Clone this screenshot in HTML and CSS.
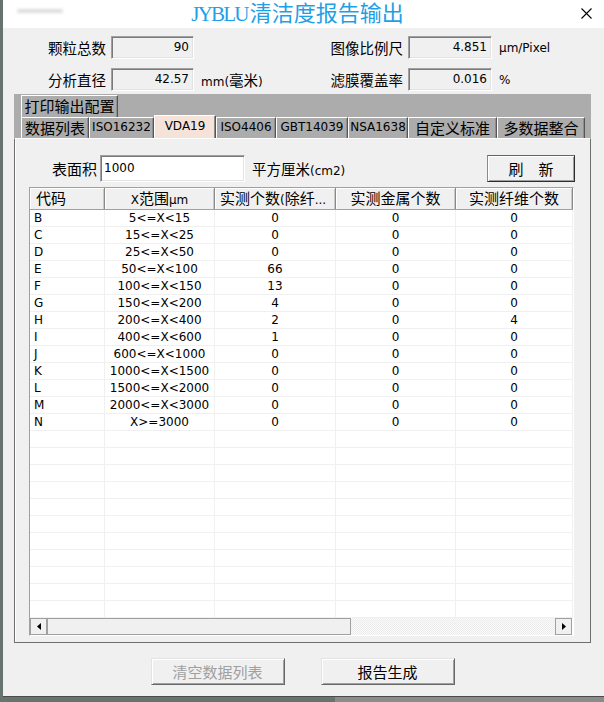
FILE: index.html
```html
<!DOCTYPE html>
<html lang="zh-CN">
<head>
    <meta charset="UTF-8">
    <title>JYBLU清洁度报告输出</title>
    <link rel="stylesheet" href="styles.css">
</head>
<body>
    <div class="window">
        <div class="titlebar">
            <div class="caption-blur"></div>
            <div class="title"><span class="brand">JYBLU</span>清洁度报告输出</div>
            <svg class="close" width="11" height="11" viewBox="0 0 11 11">
                <path d="M0.5 0.5L10.5 10.5M10.5 0.5L0.5 10.5" stroke="#000" stroke-width="1.1" fill="none"/>
            </svg>
        </div>

        <div class="info">
            <div class="lbl">颗粒总数</div>
            <div class="field">90</div>
            <div class="unit"></div>
            <div class="lbl">图像比例尺</div>
            <div class="field">4.851</div>
            <div class="unit">μm/Pixel</div>

            <div class="lbl">分析直径</div>
            <div class="field">42.57</div>
            <div class="unit">mm(<span class="cn">毫米</span>)</div>
            <div class="lbl">滤膜覆盖率</div>
            <div class="field">0.016</div>
            <div class="unit">%</div>
        </div>

        <div class="tabbox">
            <div class="tabstrip">
                <div class="tabrow">
                    <div class="tab cn t-print">打印输出配置</div>
                </div>
                <div class="tabrow">
                    <div class="tab cn t-list">数据列表</div>
                    <div class="tab t-iso16">ISO16232</div>
                    <div class="tab t-vda selected">VDA19</div>
                    <div class="tab t-iso44">ISO4406</div>
                    <div class="tab t-gbt">GBT14039</div>
                    <div class="tab t-nsa">NSA1638</div>
                    <div class="tab cn t-custom">自定义标准</div>
                    <div class="tab cn t-multi">多数据整合</div>
                </div>
            </div>

            <div class="panel">
                <div class="surface">
                    <div class="surface-lbl">表面积</div>
                    <div class="input">1000</div>
                    <div class="surface-unit"><span class="cn">平方厘米</span>(cm2)</div>
                    <button class="btn refresh">刷　新</button>
                </div>

                <div class="list">
                    <div class="list-head">
                        <div class="hcell left">代码</div>
                        <div class="hcell"><span class="lat">X</span>范围<span class="lat">μm</span></div>
                        <div class="hcell cut">实测个数<span class="lat">(</span>除纤<span class="lat">...</span></div>
                        <div class="hcell">实测金属个数</div>
                        <div class="hcell">实测纤维个数</div>
                    </div>
                    <div class="list-body">
                        <div class="row"><div class="code">B</div><div>5&lt;=X&lt;15</div><div>0</div><div>0</div><div>0</div></div>
                        <div class="row"><div class="code">C</div><div>15&lt;=X&lt;25</div><div>0</div><div>0</div><div>0</div></div>
                        <div class="row"><div class="code">D</div><div>25&lt;=X&lt;50</div><div>0</div><div>0</div><div>0</div></div>
                        <div class="row"><div class="code">E</div><div>50&lt;=X&lt;100</div><div>66</div><div>0</div><div>0</div></div>
                        <div class="row"><div class="code">F</div><div>100&lt;=X&lt;150</div><div>13</div><div>0</div><div>0</div></div>
                        <div class="row"><div class="code">G</div><div>150&lt;=X&lt;200</div><div>4</div><div>0</div><div>0</div></div>
                        <div class="row"><div class="code">H</div><div>200&lt;=X&lt;400</div><div>2</div><div>0</div><div>4</div></div>
                        <div class="row"><div class="code">I</div><div>400&lt;=X&lt;600</div><div>1</div><div>0</div><div>0</div></div>
                        <div class="row"><div class="code">J</div><div>600&lt;=X&lt;1000</div><div>0</div><div>0</div><div>0</div></div>
                        <div class="row"><div class="code">K</div><div>1000&lt;=X&lt;1500</div><div>0</div><div>0</div><div>0</div></div>
                        <div class="row"><div class="code">L</div><div>1500&lt;=X&lt;2000</div><div>0</div><div>0</div><div>0</div></div>
                        <div class="row"><div class="code">M</div><div>2000&lt;=X&lt;3000</div><div>0</div><div>0</div><div>0</div></div>
                        <div class="row"><div class="code">N</div><div>X&gt;=3000</div><div>0</div><div>0</div><div>0</div></div>
                        <div class="row"><div></div><div></div><div></div><div></div><div></div></div>
                        <div class="row"><div></div><div></div><div></div><div></div><div></div></div>
                        <div class="row"><div></div><div></div><div></div><div></div><div></div></div>
                        <div class="row"><div></div><div></div><div></div><div></div><div></div></div>
                        <div class="row"><div></div><div></div><div></div><div></div><div></div></div>
                        <div class="row"><div></div><div></div><div></div><div></div><div></div></div>
                        <div class="row"><div></div><div></div><div></div><div></div><div></div></div>
                        <div class="row"><div></div><div></div><div></div><div></div><div></div></div>
                        <div class="row"><div></div><div></div><div></div><div></div><div></div></div>
                        <div class="row"><div></div><div></div><div></div><div></div><div></div></div>
                        <div class="row"><div></div><div></div><div></div><div></div><div></div></div>
                    </div>
                    <div class="hscroll">
                        <div class="sb-btn">
                            <svg width="4" height="7" viewBox="0 0 4 7"><path d="M4 0V7L0 3.5Z" fill="#000"/></svg>
                        </div>
                        <div class="sb-thumb"></div>
                        <div class="sb-track"></div>
                        <div class="sb-btn">
                            <svg width="4" height="7" viewBox="0 0 4 7"><path d="M0 0V7L4 3.5Z" fill="#000"/></svg>
                        </div>
                    </div>
                </div>
            </div>
        </div>

        <div class="actions">
            <button class="btn wide" disabled>清空数据列表</button>
            <button class="btn wide">报告生成</button>
        </div>
    </div>
</body>
</html>
```

FILE: styles.css
```css
body {
    margin: 0;
    height: 702px;
    overflow: hidden;
    background: linear-gradient(to right, #66736f 0, #66736f 335px, #8b8b8b 335px);
    font-family: "DejaVu Sans", "Noto Sans CJK SC", sans-serif;
    font-size: 12px;
    color: #000;
}

.cn {
    font-family: "Noto Sans CJK SC", sans-serif;
    font-size: 15px;
}

.lat {
    font-family: "DejaVu Sans", sans-serif;
    font-size: 12px;
}

.window {
    margin-left: 3px;
    height: 696px;
    background-color: #f0f0f0;
    border-bottom: 1px solid #4b4b4b;
}

/* title bar */
.titlebar {
    height: 28px;
    background-color: #fff;
    display: grid;
    grid-template-columns: 1fr auto 1fr;
    align-items: center;
    padding-right: 12px;
}

.caption-blur {
    justify-self: start;
    margin: -6px 0 0 14px;
    width: 46px;
    height: 4px;
    border-radius: 2px;
    background-color: #dcdcdc;
    filter: blur(1.5px);
}

.title {
    font-family: "Liberation Serif", "Noto Sans CJK SC", serif;
    font-size: 22px;
    line-height: 28px;
    color: #1e9fe6;
    white-space: nowrap;
}

.brand {
    font-size: 21px;
    letter-spacing: -1.8px;
    margin-right: 2px;
}

.close {
    justify-self: end;
    margin-top: -2px;
}

/* top read-only fields */
.info {
    display: grid;
    grid-template-columns: 103px 83px 124px 75px 84px auto;
    grid-auto-rows: 23px;
    column-gap: 5px;
    row-gap: 9px;
    padding: 8px 0 3px;
    align-items: center;
}

.lbl {
    font-family: "Noto Sans CJK SC", sans-serif;
    font-size: 14.5px;
    text-align: right;
    line-height: 23px;
    white-space: nowrap;
}

.field,
.input {
    box-sizing: border-box;
    height: 23px;
    line-height: 21px;
    border: 1px solid;
    border-color: #a0a0a0 #fff #fff #a0a0a0;
    box-shadow: inset 1px 1px #7a7a7a, inset -1px -1px #e3e3e3;
}

.field {
    background-color: #f0f0f0;
    text-align: right;
    padding-right: 4px;
}

.unit {
    padding-left: 2px;
    white-space: nowrap;
}

.unit .cn {
    font-size: 14.5px;
}

/* tabs */
.tabbox {
    margin-left: 11px;
    width: 577px;
}

.tabstrip {
    box-sizing: border-box;
    height: 44px;
    padding: 1px 0 0 7px;
    background-color: #acacac;
}

.tabrow {
    display: flex;
    align-items: flex-end;
    height: 21px;
}

.tabrow:first-child {
    height: 22px;
}

.tab {
    box-sizing: border-box;
    height: 21px;
    line-height: 19px;
    text-align: center;
    white-space: nowrap;
    border-top: 1px solid #fff;
    border-left: 1px solid #fff;
    border-right: 1px solid #555;
    box-shadow: inset -1px 0 #8e8e8e;
    font-size: 12px;
}

.tab.cn {
    font-size: 15px;
}

.tab.selected {
    height: 23px;
    line-height: 21px;
    background-color: #f5e3da;
}

.t-print { width: 97px; height: 22px; line-height: 20px; }
.t-list { width: 68px; }
.t-iso16 { width: 65px; }
.t-vda { width: 62px; }
.t-iso44 { width: 60px; }
.t-gbt { width: 72px; }
.t-nsa { width: 60px; }
.t-custom { width: 89px; }
.t-multi { width: 88px; }

.panel {
    box-sizing: border-box;
    height: 505px;
    border: 1px solid #6e6e6e;
    border-top-color: #fff;
    box-shadow: inset 1px 0 #fff;
}

.surface {
    display: flex;
    align-items: center;
    height: 27px;
    padding-top: 16px;
}

.surface-lbl {
    width: 82px;
    margin-right: 3px;
    text-align: right;
    font-family: "Noto Sans CJK SC", sans-serif;
    font-size: 15px;
}

.input {
    width: 145px;
    height: 27px;
    line-height: 25px;
    padding-left: 3px;
    background-color: #fff;
}

.surface-unit {
    margin-left: 7px;
    white-space: nowrap;
}

.surface-unit .cn {
    font-size: 14.5px;
}

.btn {
    box-sizing: border-box;
    height: 27px;
    padding: 0;
    font-family: "Noto Sans CJK SC", sans-serif;
    font-size: 15px;
    color: #000;
    background-color: #f0f0f0;
    border: 1px solid;
    border-color: #e3e3e3 #696969 #696969 #e3e3e3;
    box-shadow: inset 1px 1px #fff, inset -1px -1px #a0a0a0;
}

.btn:disabled {
    color: #a0a0a0;
}

.refresh {
    width: 88px;
    margin-left: auto;
    margin-right: 15px;
    border-color: #646464 #2e2e2e #2e2e2e #8a8a8a;
}

/* list view */
.list {
    box-sizing: border-box;
    width: 545px;
    height: 449px;
    margin: 5px 0 0 14px;
    display: flex;
    flex-direction: column;
    background-color: #fff;
    border: 1px solid;
    border-color: #a0a0a0 #fff #fff #a0a0a0;
}

.list-head,
.row {
    display: grid;
    grid-template-columns: 75px 110px 121px 120px 117px;
}

.list-head {
    box-sizing: border-box;
    height: 22px;
    background-color: #f0f0f0;
    border-bottom: 1px solid #a0a0a0;
}

.hcell {
    font-family: "Noto Sans CJK SC", sans-serif;
    font-size: 15px;
    line-height: 20px;
    text-align: center;
    white-space: nowrap;
    overflow: hidden;
    border-right: 1px solid #8a8a8a;
    box-shadow: inset 1px 1px #fff, inset -1px 0 #c8c8c8;
}

.hcell.left {
    text-align: left;
    padding-left: 6px;
}

.hcell.cut {
    text-align: left;
    padding-left: 5px;
}

.list-body {
    flex: 1;
    overflow: hidden;
}

.row {
    box-sizing: border-box;
    height: 17px;
    border-bottom: 1px solid #f0f0f0;
}

.row div {
    line-height: 16px;
    text-align: center;
    white-space: nowrap;
    border-right: 1px solid #f0f0f0;
}

.row .code {
    text-align: left;
    padding-left: 4px;
}

.hscroll {
    display: grid;
    grid-template-columns: 17px 304px 1fr 17px;
    height: 17px;
    margin-right: 1px;
}

.sb-btn,
.sb-thumb {
    box-sizing: border-box;
    background-color: #f0f0f0;
    border: 1px solid #a0a0a0;
}

.sb-btn {
    display: flex;
    align-items: center;
    justify-content: center;
}

.sb-track {
    background: repeating-conic-gradient(#ebebeb 0 25%, #fbfbfb 0 50%) 0 0 / 2px 2px;
}

.actions {
    display: flex;
    justify-content: center;
    gap: 36px;
    margin-left: 11px;
    width: 577px;
    padding-top: 15px;
}

.btn.wide {
    width: 134px;
}
```
